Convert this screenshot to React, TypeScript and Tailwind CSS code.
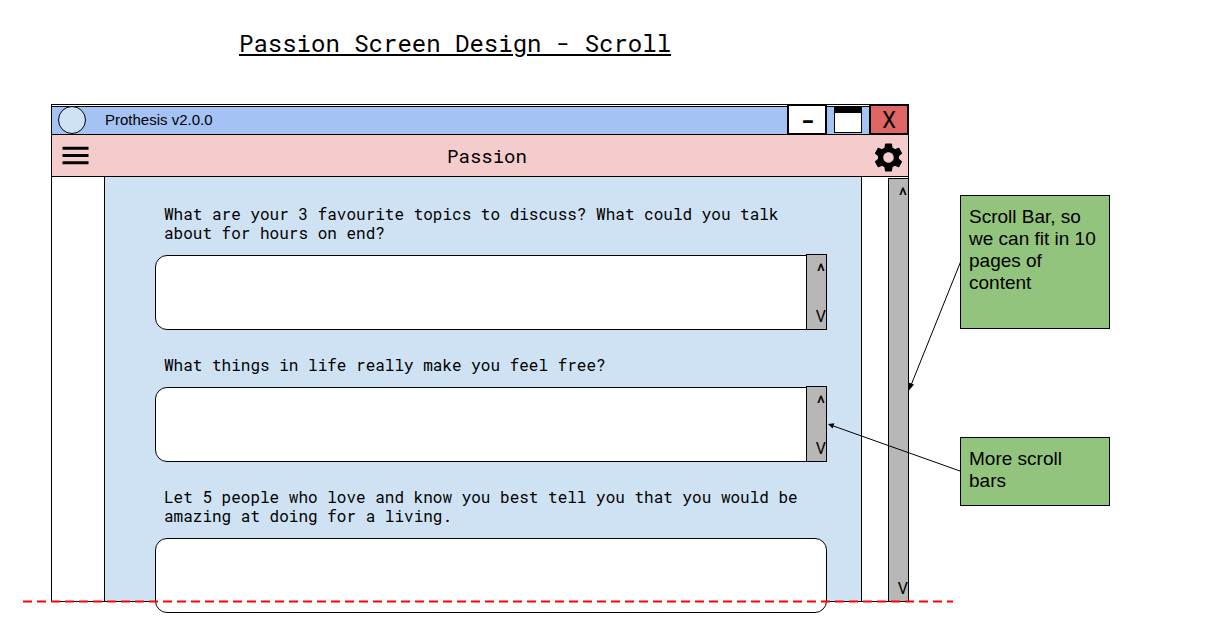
import { MdSettings } from "react-icons/md";

const mono = "font-['Roboto_Mono','Liberation_Mono',monospace]";
const sans = "font-['Liberation_Sans',Arial,sans-serif]";

function ScrollBar({ label, className }: { label: string; className: string }) {
  return (
    <div
      role="group"
      aria-label={label}
      className={`flex flex-col justify-between border-black bg-[#b7b7b7] font-['Roboto',sans-serif] text-base leading-5 ${className}`}
    >
      <button type="button" aria-label="Scroll up" className="pt-1.5 pr-px text-right text-xl leading-5">
        ^
      </button>
      <button type="button" aria-label="Scroll down" className="pb-0.5 text-right">
        V
      </button>
    </div>
  );
}

function Question({
  id,
  text,
  scroll = true,
}: {
  id: string;
  text: string;
  scroll?: boolean;
}) {
  return (
    <div className="flex flex-col gap-[13px]">
      <label htmlFor={id} className={`px-[9px] text-base leading-[19px] ${mono}`}>
        {text}
      </label>
      <div className="relative flex h-[75px] rounded-xl border border-black bg-white">
        <textarea
          id={id}
          className="min-w-0 flex-1 resize-none bg-transparent px-3 py-2 outline-none"
        />
        {scroll && (
          <ScrollBar label="Answer scroll bar" className="-mt-0.5 -mr-px -mb-px w-[21px] border" />
        )}
      </div>
    </div>
  );
}

function AppWindow() {
  return (
    <section className="relative min-w-0 flex-1">
      <header className="h-[31px] border-x border-t border-black bg-white pt-px">
        <div className="flex h-[29px] items-start border-y border-black bg-[#a4c2f4]">
          <span className="-mt-px ml-1.5 size-7 shrink-0 rounded-full border border-black bg-[#cfe2f3]" />
          <span className={`ml-[19px] flex-1 text-[15px] leading-[26px] ${sans}`}>
            Prothesis v2.0.0
          </span>
          <div className="-mt-[3px] -mr-px flex items-center gap-[7px]">
            <button
              type="button"
              aria-label="Minimize"
              className={`h-[31px] w-10 border-2 border-black bg-white pt-px text-2xl leading-[27px] font-bold ${mono}`}
            >
              -
            </button>
            <button
              type="button"
              aria-label="Maximize"
              className="h-[27px] w-7 border border-t-[7px] border-black bg-white"
            />
            <button
              type="button"
              aria-label="Close"
              className={`h-[31px] w-10 border-2 border-black bg-[#e06666] text-2xl leading-[27px] ${mono}`}
            >
              X
            </button>
          </div>
        </div>
      </header>

      <nav className="flex h-[42px] items-center justify-between border-x border-b border-black bg-[#f4cccc] pr-0.5 pl-2.5">
        <button type="button" aria-label="Menu">
          <svg width="27" height="19" viewBox="0 0 27 19" stroke="#000" strokeWidth="3">
            <path d="M0.5 2.3H26.5M0.5 9.5H26.5M0.5 16.7H26.5" />
          </svg>
        </button>
        <h2 className={`pl-3.5 text-[19px] leading-6 ${mono}`}>Passion</h2>
        <button type="button" aria-label="Settings" className="pt-[3px]">
          <MdSettings size={35} />
        </button>
      </nav>

      <div className="flex border-x border-b border-black bg-white pl-[52px]">
        <form className="flex flex-1 flex-col gap-[25px] border-x border-black bg-[#cfe2f3] pt-[27px] pr-[34px] pl-[50px]">
          <Question
            id="topics"
            text="What are your 3 favourite topics to discuss? What could you talk about for hours on end?"
          />
          <Question id="free" text="What things in life really make you feel free?" />
          <div className="-mb-3">
            <Question
              id="people"
              text="Let 5 people who love and know you best tell you that you would be amazing at doing for a living."
              scroll={false}
            />
          </div>
        </form>
        <ScrollBar label="Page scroll bar" className="mt-px ml-[26px] w-5 border-t border-l" />
      </div>

      <svg
        aria-hidden="true"
        className="pointer-events-none absolute -right-11 -bottom-0.5 -left-7 h-1 w-[calc(100%+72px)]"
      >
        <line x1="0" y1="1.5" x2="100%" y2="1.5" stroke="#ff0000" strokeWidth="2" strokeDasharray="9 5" />
      </svg>
    </section>
  );
}

export default function App() {
  return (
    <main className="min-h-[635px] bg-white text-black">
      <h1 className={`pt-[27px] pl-[239px] text-2xl leading-8 underline ${mono}`}>
        Passion Screen Design - Scroll
      </h1>
      <div className="mt-[45px] flex gap-[51px] pr-[113px] pl-[51px]">
        <AppWindow />
        <aside
          className={`flex w-[150px] shrink-0 flex-col gap-[108px] pt-[91px] text-[19px] leading-[22px] ${sans}`}
        >
          <div className="relative border border-black bg-[#93c47d] px-2 pt-2.5 pb-[34px]">
            Scroll Bar, so we can fit in 10 pages of content
            <svg
              aria-hidden="true"
              className="absolute top-[65px] right-full"
              width="53"
              height="132"
              viewBox="0 0 53 132"
            >
              <path d="M52.5 1L3.5 123" stroke="#000" fill="none" />
              <path d="M0.5 130L0.6 121.5L6 123.6Z" />
            </svg>
          </div>
          <div className="relative border border-black bg-[#93c47d] px-2 pt-2.5 pb-[13px]">
            More scroll bars
            <svg
              aria-hidden="true"
              className="absolute -top-4 right-full"
              width="134"
              height="52"
              viewBox="0 0 134 52"
            >
              <path d="M133 49L5 3.5" stroke="#000" fill="none" />
              <path d="M1 2L7.4 1.3L5.6 6.5Z" />
            </svg>
          </div>
        </aside>
      </div>
    </main>
  );
}
